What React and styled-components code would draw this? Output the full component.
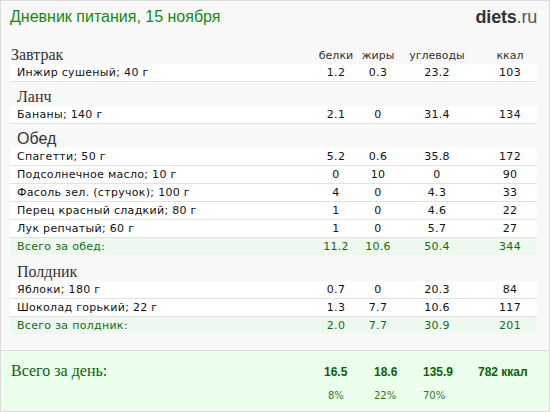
import styled, { createGlobalStyle } from "styled-components";

const GlobalStyle = createGlobalStyle`
  html, body {
    margin: 0;
    padding: 0;
    background: #ffffff;
  }
  body {
    font-family: "DejaVu Sans", Verdana, sans-serif;
  }
`;

const Page = styled.div`
  width: 550px;
  height: 412px;
  box-sizing: border-box;
  border: 1px solid #dcdcdc;
  background: #f8f8f8;
  display: flex;
  flex-direction: column;
  overflow: hidden;
`;

const Header = styled.div`
  height: 39px;
  display: flex;
  justify-content: space-between;
  align-items: flex-start;
  padding: 5px 12px 0 9px;
  box-sizing: border-box;
`;

const Title = styled.h1`
  margin: 0;
  font-family: "Liberation Sans", Arial, sans-serif;
  font-weight: normal;
  font-size: 16px;
  line-height: 21px;
  color: #138a13;
`;

const Logo = styled.div`
  font-family: "Liberation Sans", Arial, sans-serif;
  font-size: 18px;
  line-height: 22px;
  color: #333;
  letter-spacing: -0.2px;

  b {
    font-weight: bold;
  }
  span {
    color: #555;
  }
`;

const Content = styled.div`
  padding: 0 12px 0 9px;
`;

const Grid = styled.div`
  display: grid;
  grid-template-columns: 1fr 44px 40px 78px 61px;
  & > :nth-child(n + 2) {
    text-align: center;
  }
  & > :last-child {
    padding-left: 7px;
  }
`;

const HeadRow = styled(Grid)`
  height: ${(p) => (p.$afterTotal ? 26 : 24)}px;
  align-items: end;
  box-sizing: border-box;
`;

const MealTitle = styled.div`
  font-family: ${(p) =>
    p.$sans
      ? '"Liberation Sans", Arial, sans-serif'
      : '"Liberation Serif", Georgia, serif'};
  font-size: 16px;
  line-height: 19px;
  color: #333;
  padding-left: 1px;
`;

const Label = styled.div`
  font-size: 11px;
  line-height: 14px;
  color: #333;
  padding-bottom: 1px;
`;

const Row = styled(Grid)`
  height: ${(p) => (p.$total ? 17 : 18)}px;
  box-sizing: border-box;
  align-items: center;
  padding-left: 7px;
  background: ${(p) => (p.$total ? "#eef8ee" : "#ffffff")};
  border-bottom: ${(p) => (p.$total ? "none" : "1px solid #e2e2e2")};
  font-size: 11px;
  letter-spacing: 0.3px;
  color: ${(p) => (p.$total ? "#156b15" : "#111")};
`;

const Cell = styled.div`
  white-space: nowrap;
`;

const Footer = styled.div`
  margin-top: auto;
  height: 61px;
  box-sizing: border-box;
  border-top: 1px solid #dcdcdc;
  background: #ebfdeb;
  padding: 10px 0 0 10px;
  display: grid;
  grid-template-columns: 313px 50px 49px 55px 1fr;
  grid-template-rows: 20px 16px;
  row-gap: 9px;
  align-items: baseline;
  color: #0f5e0f;
`;

const DayTitle = styled.div`
  font-family: "Liberation Serif", Georgia, serif;
  font-size: 16px;
  line-height: 20px;
`;

const DayValue = styled.div`
  font-family: "Liberation Sans", Arial, sans-serif;
  font-weight: bold;
  font-size: 12px;
  white-space: nowrap;
`;

const Percent = styled.div`
  font-size: 10px;
  color: #2a7a2a;
  padding-left: ${(p) => p.$shift || 0}px;
`;

const meals = [
  {
    title: "Завтрак",
    labels: true,
    items: [["Инжир сушеный; 40 г", "1.2", "0.3", "23.2", "103"]],
  },
  {
    title: "Ланч",
    items: [["Бананы; 140 г", "2.1", "0", "31.4", "134"]],
  },
  {
    title: "Обед",
    sans: true,
    items: [
      ["Спагетти; 50 г", "5.2", "0.6", "35.8", "172"],
      ["Подсолнечное масло; 10 г", "0", "10", "0", "90"],
      ["Фасоль зел. (стручок); 100 г", "4", "0", "4.3", "33"],
      ["Перец красный сладкий; 80 г", "1", "0", "4.6", "22"],
      ["Лук репчатый; 60 г", "1", "0", "5.7", "27"],
    ],
    total: ["Всего за обед:", "11.2", "10.6", "50.4", "344"],
  },
  {
    title: "Полдник",
    items: [
      ["Яблоки; 180 г", "0.7", "0", "20.3", "84"],
      ["Шоколад горький; 22 г", "1.3", "7.7", "10.6", "117"],
    ],
    total: ["Всего за полдник:", "2.0", "7.7", "30.9", "201"],
  },
];

function Meal({ meal, afterTotal }) {
  return (
    <>
      <HeadRow $afterTotal={afterTotal}>
        <MealTitle $sans={meal.sans}>{meal.title}</MealTitle>
        {meal.labels && (
          <>
            <Label>белки</Label>
            <Label>жиры</Label>
            <Label>углеводы</Label>
            <Label>ккал</Label>
          </>
        )}
      </HeadRow>
      {meal.items.map((item) => (
        <Row key={item[0]}>
          {item.map((v, i) => (
            <Cell key={i}>{v}</Cell>
          ))}
        </Row>
      ))}
      {meal.total && (
        <Row $total>
          {meal.total.map((v, i) => (
            <Cell key={i}>{v}</Cell>
          ))}
        </Row>
      )}
    </>
  );
}

export default function App() {
  return (
    <>
      <GlobalStyle />
      <Page>
        <Header>
          <Title>Дневник питания, 15 ноября</Title>
          <Logo>
            <b>diets</b>
            <span>.ru</span>
          </Logo>
        </Header>
        <Content>
          {meals.map((meal, i) => (
            <Meal key={meal.title} meal={meal} afterTotal={i > 0 && !!meals[i - 1].total} />
          ))}
        </Content>
        <Footer>
          <DayTitle>Всего за день:</DayTitle>
          <DayValue>16.5</DayValue>
          <DayValue>18.6</DayValue>
          <DayValue>135.9</DayValue>
          <DayValue>782 ккал</DayValue>
          <span />
          <Percent $shift={4}>8%</Percent>
          <Percent>22%</Percent>
          <Percent>70%</Percent>
        </Footer>
      </Page>
    </>
  );
}
